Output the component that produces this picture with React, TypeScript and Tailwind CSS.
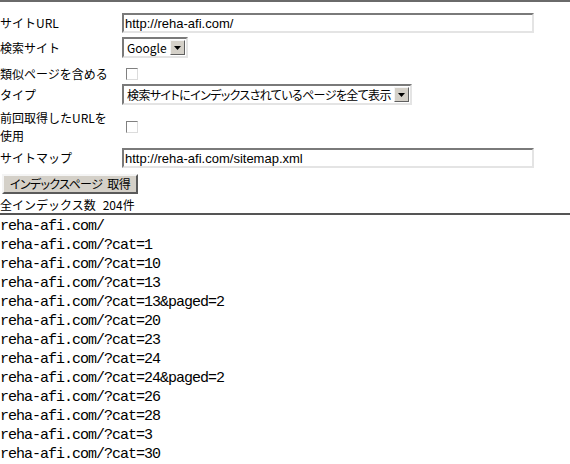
const urls = [
  "reha-afi.com/",
  "reha-afi.com/?cat=1",
  "reha-afi.com/?cat=10",
  "reha-afi.com/?cat=13",
  "reha-afi.com/?cat=13&paged=2",
  "reha-afi.com/?cat=20",
  "reha-afi.com/?cat=23",
  "reha-afi.com/?cat=24",
  "reha-afi.com/?cat=24&paged=2",
  "reha-afi.com/?cat=26",
  "reha-afi.com/?cat=28",
  "reha-afi.com/?cat=3",
  "reha-afi.com/?cat=30",
];

const inset =
  "border-2 border-t-[#7a7a7a] border-l-[#7a7a7a] border-b-[#e4e4e4] border-r-[#e4e4e4] bg-white";

function TextBox({ value }: { value: string }) {
  return (
    <div className={`${inset} w-[412px] h-[20px] flex items-center pl-[1px] text-[13px] font-['Liberation_Sans',sans-serif] leading-none`}>
      {value}
    </div>
  );
}

function Checkbox() {
  return (
    <div className="w-[12px] h-[12px] ml-[4px] border border-t-[#808080] border-l-[#808080] border-b-[#dcdcdc] border-r-[#dcdcdc] bg-white" />
  );
}

function DropDown({ value, tight = false }: { value: string; tight?: boolean }) {
  return (
    <div className={`${inset} h-[21px] inline-flex items-center`}>
      <span className={`pl-[3px] pr-[3px] text-[12px] leading-none [font-feature-settings:'palt'] ${tight ? "tracking-[-0.6px]" : ""}`}>
        {value}
      </span>
      <span className="w-[15px] h-[15px] mr-[1px] bg-[#d4d0c8] border border-t-[#f4f4f4] border-l-[#f4f4f4] border-b-[#606060] border-r-[#606060] flex items-center justify-center">
        <svg width="7" height="4" viewBox="0 0 7 4">
          <path d="M0 0h7L3.5 4z" fill="#000" />
        </svg>
      </span>
    </div>
  );
}

function Row({ label, className, children }: { label: React.ReactNode; className: string; children: React.ReactNode }) {
  return (
    <div className={`flex items-center ${className}`}>
      <div className="w-[122px] shrink-0 text-[12px] leading-[18px]">{label}</div>
      {children}
    </div>
  );
}

export default function App() {
  return (
    <div className="w-[570px] h-[464px] overflow-hidden bg-white text-black font-['Noto_Sans_CJK_JP',sans-serif]">
      <div className="h-[2px] bg-[#6a6a6a]" />

      <Row label="サイトURL" className="mt-[11px] h-[20px]">
        <TextBox value="http://reha-afi.com/" />
      </Row>
      <Row label="検索サイト" className="mt-[4px] h-[21px]">
        <DropDown value="Google" />
      </Row>
      <Row label="類似ページを含める" className="mt-[9px] h-[13px]">
        <Checkbox />
      </Row>
      <Row label="タイプ" className="mt-[4px] h-[21px]">
        <DropDown value="検索サイトにインデックスされているページを全て表示" tight />
      </Row>
      <Row label={<>前回取得したURLを<br />使用</>} className="mt-[3px] h-[38px]">
        <Checkbox />
      </Row>
      <Row label="サイトマップ" className="mt-[2px] h-[20px]">
        <TextBox value="http://reha-afi.com/sitemap.xml" />
      </Row>

      <button className="mt-[6px] ml-[2px] w-[136px] h-[20px] bg-[#d4d0c8] border-2 border-t-[#f4f4f4] border-l-[#f4f4f4] border-b-[#5a5a5a] border-r-[#5a5a5a] text-[12px] leading-none tracking-[-0.6px] [font-feature-settings:'palt']">
        インデックスページ<span className="ml-[5px]">取得</span>
      </button>

      <div className="h-[19px] text-[12px] leading-[21px]">
        全インデックス数<span className="ml-[7px]">204件</span>
      </div>
      <div className="h-[2px] bg-[#555]" />

      <ul className="pt-[2px] font-['Liberation_Mono',monospace] text-[15px] leading-[19px] tracking-[-1px]">
        {urls.map((u) => (
          <li key={u}>{u}</li>
        ))}
      </ul>
    </div>
  );
}
